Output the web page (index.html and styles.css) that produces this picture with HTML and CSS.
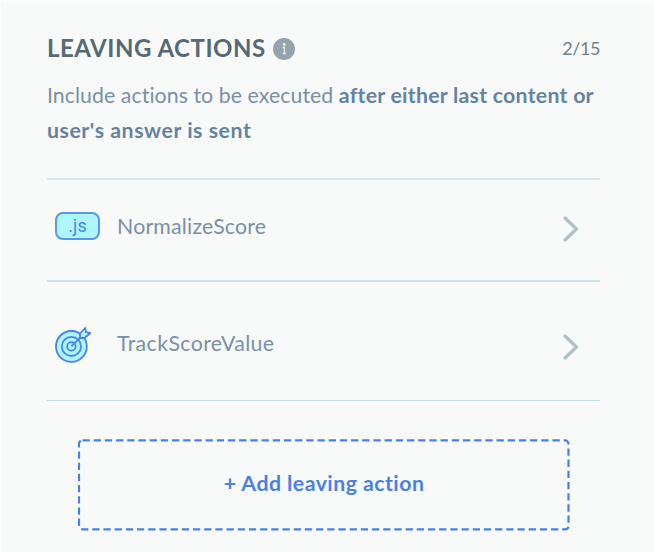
FILE: index.html
```
<!DOCTYPE html>
<html lang="en">
<head>
  <meta charset="UTF-8">
  <title>Leaving actions</title>
  <link rel="stylesheet" href="styles.css">
</head>
<body>
  <div class="panel">
    <div class="header">
      <h2 class="title">LEAVING ACTIONS</h2>
      <svg class="info" viewBox="0 0 22 22">
        <circle cx="11" cy="11" r="11" fill="#94a3ae"/>
        <circle cx="11.2" cy="6.5" r="1.4" fill="#f1f5f6"/>
        <path d="M9.6 9.6h1.8v6.2M9.6 15.4h3.4" fill="none" stroke="#e3e9ec" stroke-width="1.5"/>
      </svg>
      <span class="counter">2/15</span>
    </div>
    <p class="description">Include actions to be executed <b>after either last content or</b><br><b class="second">user's answer is sent</b></p>

    <div class="actions">
      <div class="action">
        <div class="icon"><span class="js">.js</span></div>
        <span class="name normalize">NormalizeScore</span>
        <svg class="chevron" viewBox="0 0 16 26"><path d="M2 2l11.5 11L2 24"/></svg>
      </div>
      <div class="action track">
        <div class="icon">
          <svg class="target" viewBox="0 0 36 36">
            <circle cx="16.4" cy="19.4" r="15.4"/>
            <circle cx="16.4" cy="19.4" r="9.6"/>
            <circle cx="16.4" cy="19.4" r="4.2"/>
            <path d="M16.4 19.4L30 6"/>
            <path d="M25 11V6.5L30.2 1l.8 4.2 4.2.8-5.4 5z"/>
          </svg>
        </div>
        <span class="name tracking">TrackScoreValue</span>
        <svg class="chevron" viewBox="0 0 16 26"><path d="M2 2l11.5 11L2 24"/></svg>
      </div>
    </div>

    <button class="add">
      <svg class="outline" viewBox="0 0 492 92">
        <rect x="1" y="1.4" width="489.5" height="89" rx="3.5"/>
      </svg>
      <span class="add-label">+ Add leaving action</span>
    </button>
  </div>
</body>
</html>
```
FILE: styles.css
```
* {
  box-sizing: border-box;
}

body {
  margin: 0;
  background: #fff;
  font-family: Lato, "Open Sans", sans-serif;
  font-variant-ligatures: none;
  color: #7890a8;
}

.panel {
  margin: 2px 0 0 1px;
  height: 550px;
  padding: 29px 54px 0 46px;
  background: #f8faf9;
  overflow: hidden;
}

.header {
  display: flex;
  align-items: center;
  height: 34px;
}

.title {
  margin: 0;
  font-size: 24px;
  line-height: 34px;
  font-weight: 700;
  letter-spacing: 0.52px;
  color: #566975;
  white-space: nowrap;
}

.info {
  width: 22px;
  height: 22px;
  margin: 2px 0 0 7px;
}

.counter {
  margin-left: auto;
  font-size: 18px;
  letter-spacing: -0.4px;
  color: #71808c;
}

.description {
  margin: 13px 0 0;
  font-size: 21.3px;
  line-height: 35px;
  letter-spacing: 0.06px;
  white-space: nowrap;
}

.description b {
  font-weight: 700;
  letter-spacing: 0.25px;
  color: #6582a3;
}

.description .second {
  letter-spacing: 0.54px;
}

.actions {
  margin-top: 30px;
  border-top: 2px solid #d5e7e9;
}

.action {
  display: flex;
  align-items: center;
  height: 102px;
  padding: 0 21px 8px 8px;
  border-bottom: 2px solid #cbe0e4;
}

.action.track {
  height: 119px;
  padding: 7px 21px 0 8px;
  border-bottom: 1px solid #c2dee4;
}

.icon {
  width: 62px;
  height: 36px;
  display: flex;
  align-items: center;
}

.js {
  width: 45px;
  height: 28px;
  border: 2px solid #5a95f0;
  border-radius: 8px;
  background: #aff5fc;
  color: #4a86e8;
  font: 18px/24px Roboto, sans-serif;
  text-align: center;
}

.track .icon {
  padding-top: 1px;
}

.target {
  width: 36px;
  height: 36px;
  fill: #aff5fc;
  stroke: #4784ed;
  stroke-width: 1.8;
  stroke-linejoin: round;
}

.name {
  font-size: 21.3px;
  line-height: 30px;
}

.normalize {
  letter-spacing: 0.2px;
}

.tracking {
  margin-top: -4px;
  letter-spacing: 0.4px;
}

.chevron {
  width: 16px;
  height: 26px;
  margin-left: auto;
  margin-top: 6px;
  fill: none;
  stroke: #a9c1c7;
  stroke-width: 3.2;
  stroke-linecap: round;
}

.track .chevron {
  margin-top: 5px;
}

.add {
  display: grid;
  width: 492px;
  height: 92px;
  margin: 38px 0 0 31px;
  padding: 0;
  border: 0;
  background: none;
  color: #4880e4;
  font: 700 21.3px/30px Lato, "Open Sans", sans-serif;
  letter-spacing: 0.45px;
}

/* outline and label share the same cell */
.outline,
.add-label {
  grid-area: 1 / 1;
}

.outline {
  width: 492px;
  height: 92px;
  fill: none;
  stroke: #4880e8;
  stroke-width: 2.2;
  stroke-dasharray: 7.3 3.89;
}

.add-label {
  align-self: center;
  margin-bottom: 4px;
}
```
